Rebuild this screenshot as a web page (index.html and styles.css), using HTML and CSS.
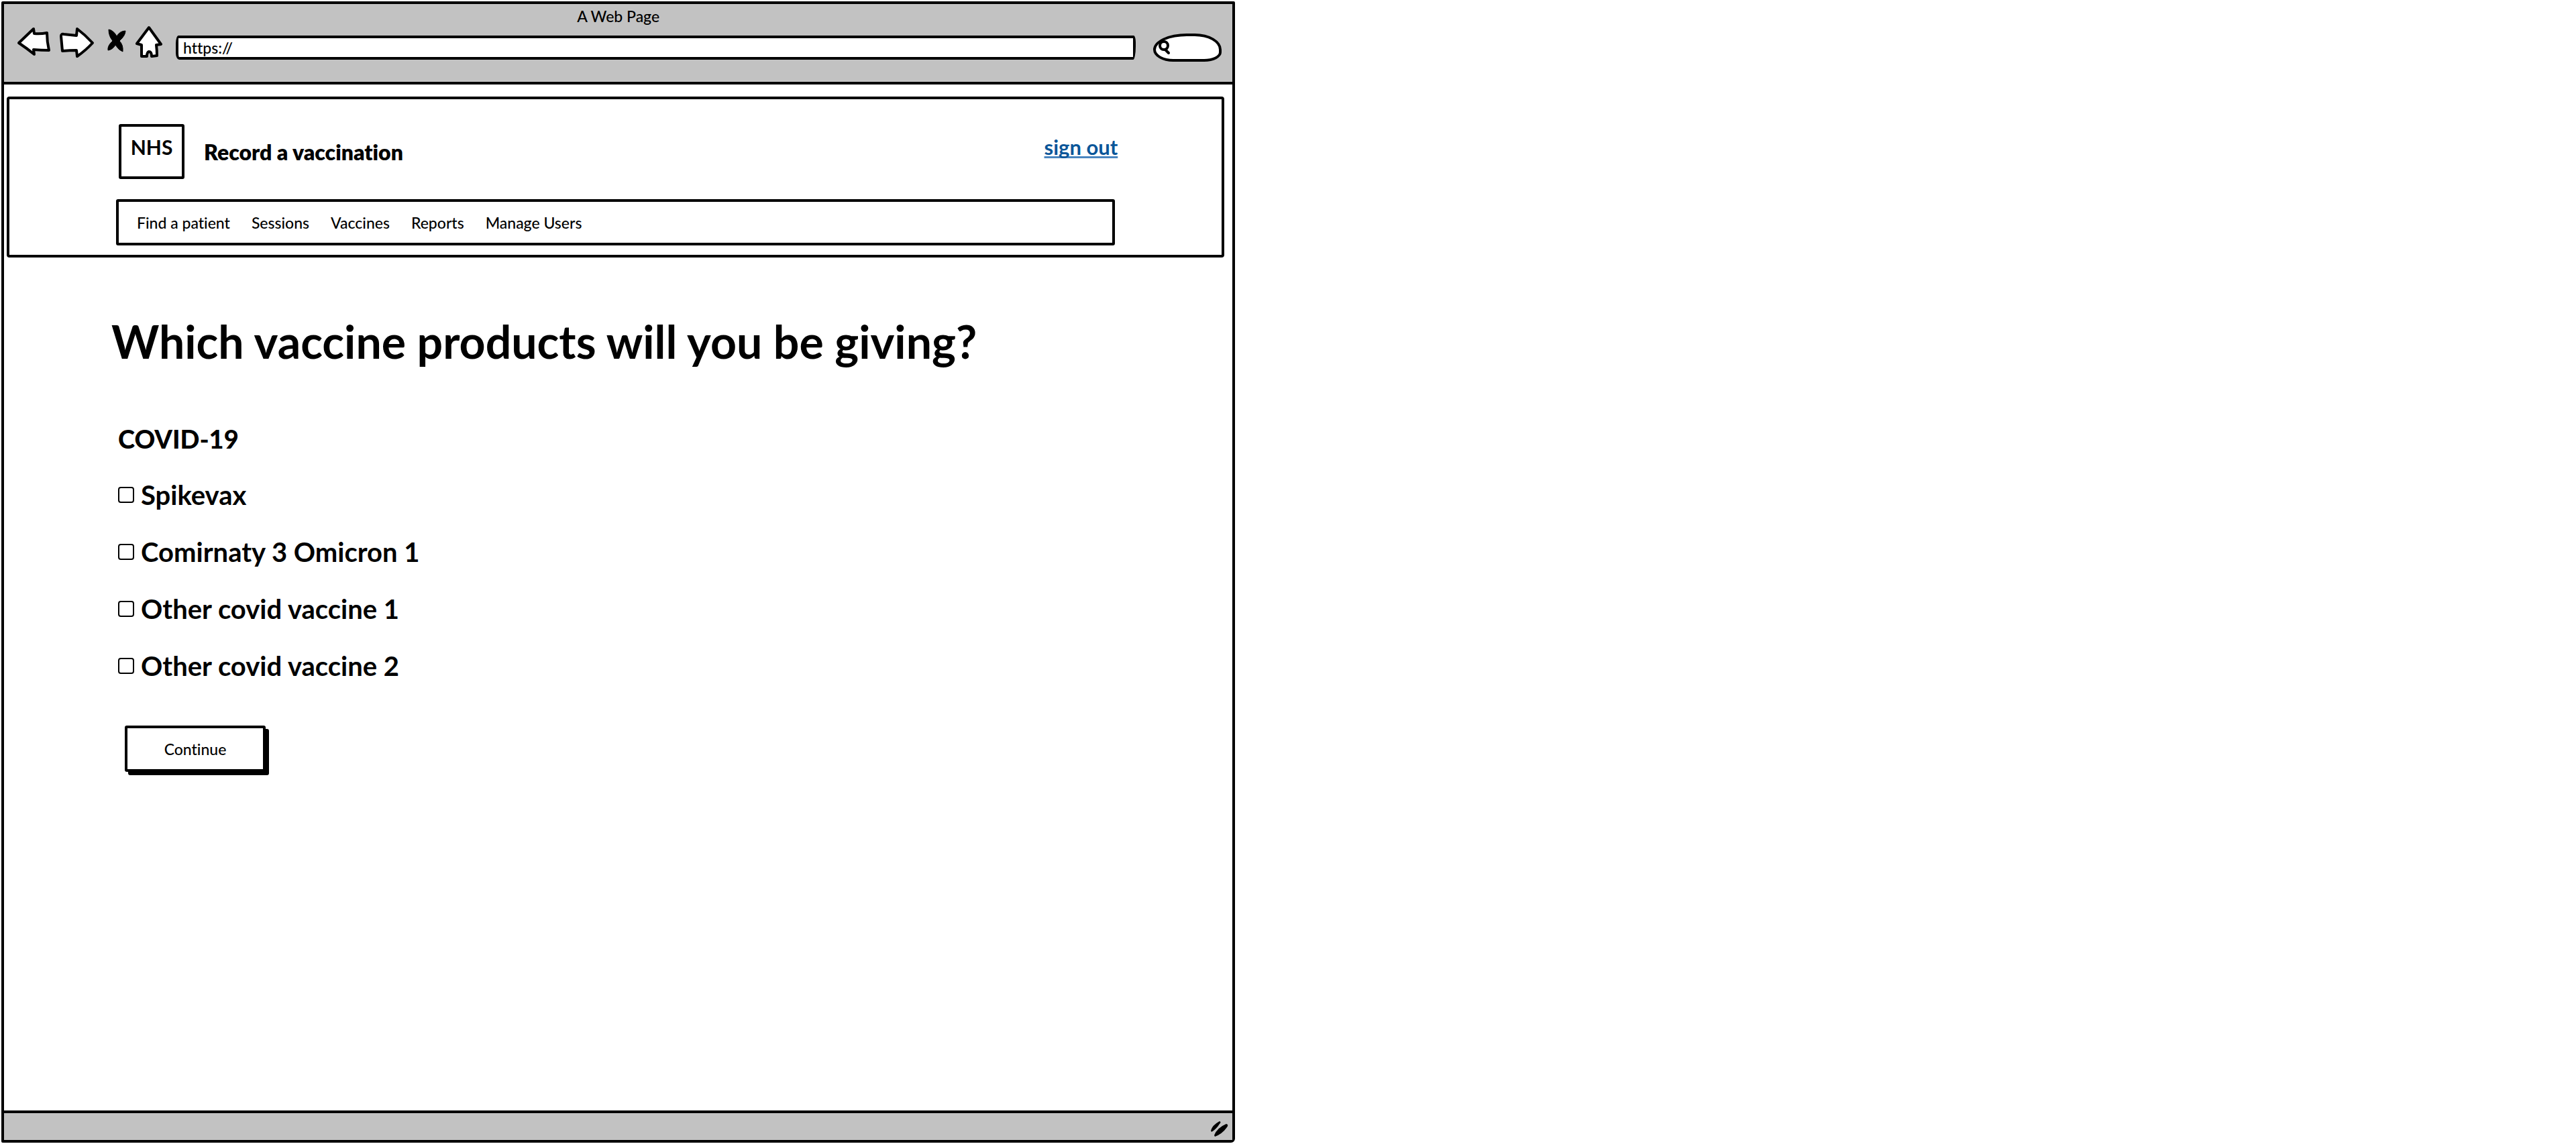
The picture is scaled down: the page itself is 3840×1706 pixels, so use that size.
FILE: index.html
```html
<!DOCTYPE html>
<html lang="en">
<head>
<meta charset="utf-8">
<title>A Web Page</title>
<link rel="stylesheet" href="styles.css">
</head>
<body>
<div class="window">
  <header class="chrome">
    <div class="chrome-title">A Web Page</div>
    <div class="toolbar">
      <div class="tools">
        <button class="tool" type="button" aria-label="Back">
          <svg width="54" height="66" viewBox="24 38 54 66"><path d="M28 64 L50 43 L51 50 Q60 51 70 49 Q70 62 73 75 Q62 75 50 74 L51 81 Q40 72 28 64Z"/></svg>
        </button>
        <button class="tool" type="button" aria-label="Forward">
          <svg width="54" height="66" viewBox="88 38 54 66"><path d="M91 54 Q91 50 95 51 L114 53 L115 43 Q127 52 138 64 Q128 75 115 84 L114 75 Q104 75 93 76Z"/></svg>
        </button>
        <button class="tool" type="button" aria-label="Stop">
          <svg width="40" height="66" viewBox="152 38 40 66"><path class="solid" d="M162 44 Q169 45 174 54 Q179 46 187 46 Q187 53 178 61 Q184 67 183 77 Q177 75 172 67 Q168 74 161 75 Q160 68 168 61 Q162 54 162 44Z"/></svg>
        </button>
        <button class="tool" type="button" aria-label="Home">
          <svg width="42" height="66" viewBox="202 38 42 66"><path d="M222 41 L240 66 L233 67 Q234 75 234 83 L226 84 Q226 77 222 77 Q219 78 219 84 L211 84 L211 67 L204 65Z"/></svg>
        </button>
      </div>
      <input class="address" type="text" value="https://" aria-label="Address">
      <label class="search">
        <svg width="20" height="22" viewBox="0 0 20 22"><circle cx="9" cy="8" r="6"/><path d="M11 14 L16 19"/></svg>
        <input class="search-input" type="text" aria-label="Search">
      </label>
    </div>
  </header>

  <div class="page">
    <header class="site-header">
      <div class="brand-row">
        <div class="logo">NHS</div>
        <div class="service">Record a vaccination</div>
        <a class="sign-out" href="#">sign out</a>
      </div>
      <nav class="site-nav">
        <a href="#">Find a patient</a>
        <a href="#">Sessions</a>
        <a href="#">Vaccines</a>
        <a href="#">Reports</a>
        <a href="#">Manage Users</a>
      </nav>
    </header>

    <main class="content">
      <h1>Which vaccine products will you be giving?</h1>
      <form>
        <fieldset class="products">
          <legend>COVID-19</legend>
          <label class="option"><input type="checkbox">Spikevax</label>
          <label class="option"><input type="checkbox">Comirnaty 3 Omicron 1</label>
          <label class="option"><input type="checkbox">Other covid vaccine 1</label>
          <label class="option"><input type="checkbox">Other covid vaccine 2</label>
        </fieldset>
        <button class="continue" type="button">Continue</button>
      </form>
    </main>
  </div>

  <footer class="status">
    <svg width="32" height="30" viewBox="0 0 32 30"><path d="M3 16 Q5 8 16 2 Q19 3 16 6 Q11 14 4 18Z"/><path d="M8 23 Q12 12 26 6 Q30 7 27 11 Q20 21 9 25Z"/></svg>
  </footer>
</div>
</body>
</html>
```
FILE: styles.css
```css
* {
  box-sizing: border-box;
}

body {
  margin: 0;
  padding: 2px;
  background: #fff;
  color: #000;
  font-family: Lato, "Liberation Sans", sans-serif;
  font-size: 23px;
  font-weight: 500;
  font-variant-ligatures: none;
}

button,
input {
  font: inherit;
  font-variant-ligatures: none;
  color: inherit;
}

a {
  color: inherit;
  text-decoration: none;
}

.window {
  display: flex;
  flex-direction: column;
  width: calc(48% - 2px);
  min-height: calc(100vh - 4px);
  border: 4px solid #000;
  border-radius: 2px 2px 6px 2px;
}

/* Browser chrome */
.chrome {
  padding-bottom: 18px;
  border-bottom: 4px solid #000;
  background: #c2c2c2;
}

.chrome-title {
  padding-top: 4px;
  line-height: 28px;
  text-align: center;
}

.toolbar {
  display: flex;
  align-items: center;
  padding: 0 16px 0 18px;
}

.tools {
  display: flex;
  gap: 10px;
}

.tool {
  padding: 0;
  border: 0;
  background: none;
}

.tool svg {
  display: block;
  fill: #fff;
  stroke: #000;
  stroke-width: 4;
  stroke-linejoin: round;
}

.tool .solid {
  fill: #000;
  stroke-width: 1;
}

.address {
  flex: 1;
  min-width: 0;
  height: 36px;
  margin: 0 26px 0 18px;
  padding: 0 7px;
  border: 4px solid #000;
  border-radius: 4px 3px 4px 5px / 12px 10px 20px 10px;
  background: #fff;
}

.search {
  display: flex;
  align-items: center;
  width: 102px;
  height: 42px;
  padding-left: 3px;
  border: 4px solid #000;
  border-radius: 50px 40px 26px 30px / 24px 24px 14px 18px;
  background: #fff;
}

.search svg {
  flex: none;
  fill: none;
  stroke: #000;
  stroke-width: 4;
  stroke-linecap: round;
}

.search-input {
  flex: 1;
  min-width: 0;
  border: 0;
  background: none;
  outline: 0;
}

/* Page */
.page {
  flex: 1;
}

.site-header {
  margin: 18px 12px 0 4px;
  padding: 37px 159px 14px;
  border: 4px solid #000;
  border-radius: 4px;
}

.brand-row {
  display: flex;
  align-items: center;
  margin: 0 -4px 0 4px;
}

.logo {
  display: flex;
  align-items: center;
  justify-content: center;
  width: 98px;
  height: 82px;
  padding-bottom: 14px;
  border: 4px solid #000;
  border-radius: 3px;
  font-size: 30px;
  font-weight: 700;
}

.service {
  margin-left: 29px;
  font-size: 32px;
  font-weight: 800;
}

.sign-out {
  margin-left: auto;
  padding-bottom: 14px;
  color: #0b5699;
  font-size: 31px;
  font-weight: 700;
  text-decoration: underline;
  text-decoration-color: #4a86c0;
  text-decoration-thickness: 3px;
  text-decoration-skip-ink: none;
  text-underline-offset: 2px;
}

.site-nav {
  display: flex;
  align-items: center;
  gap: 32px;
  min-height: 69px;
  margin-top: 30px;
  padding: 0 27px;
  border: 4px solid #000;
  border-radius: 3px;
}

.content {
  padding: 85px 160px 40px;
}

h1 {
  margin: 0 0 81px;
  font-size: 68px;
  font-weight: 700;
  line-height: 80px;
}

.products {
  margin: 0 0 47px 10px;
  padding: 0;
  border: 0;
}

.products legend {
  margin-bottom: 17px;
  padding: 0;
  font-size: 38px;
  font-weight: 900;
  line-height: 48px;
}

.option {
  display: flex;
  align-items: center;
  gap: 10px;
  width: fit-content;
  height: 85px;
  font-size: 40px;
  font-weight: 700;
}

.option input {
  appearance: none;
  width: 24px;
  height: 24px;
  margin: 0;
  border: 2px solid #000;
  border-radius: 4px;
}

.continue {
  width: 210px;
  height: 69px;
  margin-left: 20px;
  border: 4px solid #000;
  border-radius: 3px;
  background: #fff;
  box-shadow: 5px 5px 0 #000;
}

/* Status bar */
.status {
  display: flex;
  align-items: flex-end;
  justify-content: flex-end;
  height: 44px;
  padding: 0 3px 0 0;
  border-top: 4px solid #000;
  background: #c2c2c2;
}
```
